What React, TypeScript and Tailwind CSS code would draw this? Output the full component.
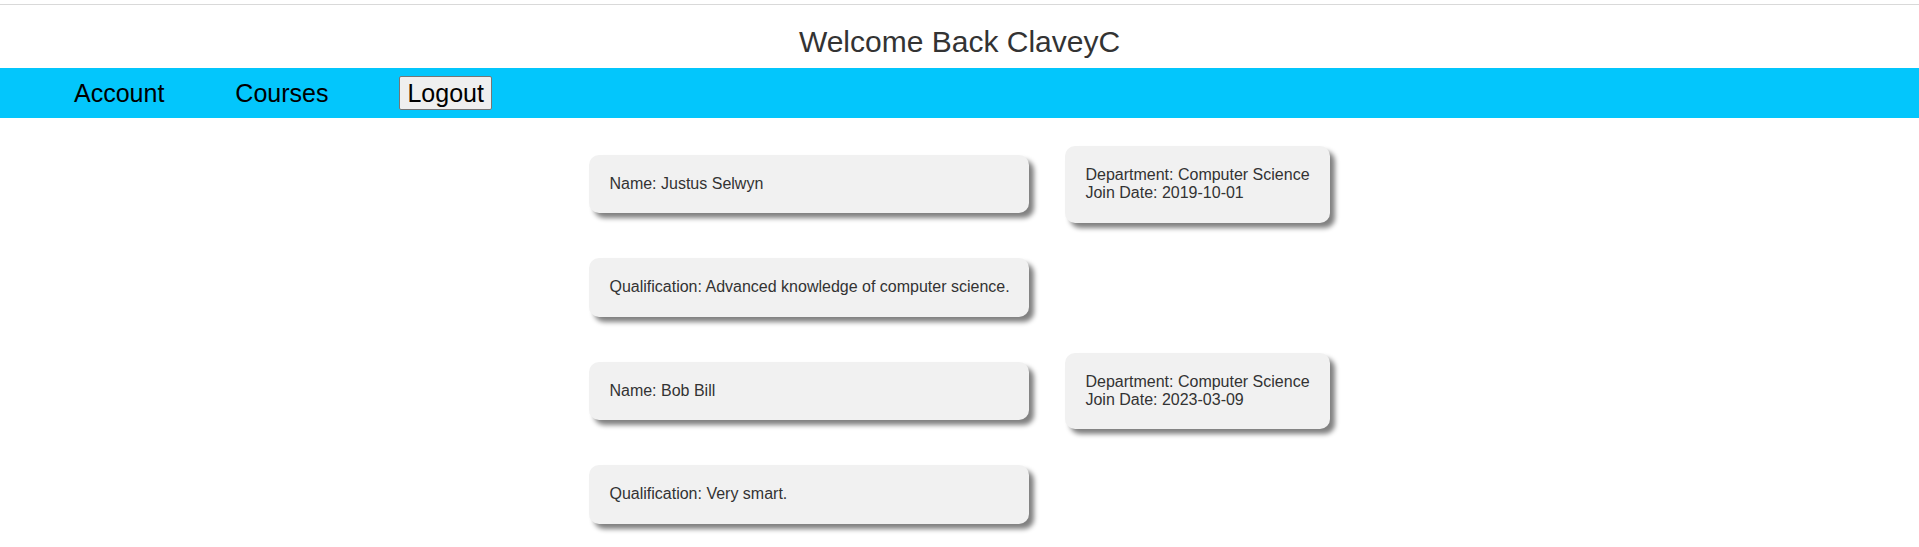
import React from "react";

type Teacher = {
  name: string;
  department: string;
  joinDate: string;
  qualification: string;
};

const teachers: Teacher[] = [
  {
    name: "Justus Selwyn",
    department: "Computer Science",
    joinDate: "2019-10-01",
    qualification: "Advanced knowledge of computer science.",
  },
  {
    name: "Bob Bill",
    department: "Computer Science",
    joinDate: "2023-03-09",
    qualification: "Very smart.",
  },
];

const card =
  "bg-[#f1f1f1] rounded-[10px] p-[20px] text-[16px] leading-[1.15] text-[#333] whitespace-nowrap shadow-[5px_5px_5px_gray]";

export default function App() {
  return (
    <div className="min-h-screen bg-white font-['Liberation_Sans',Arial,sans-serif]">
      <div className="pt-[4px]">
        <div className="border-t border-[#d9d9d9]" />
      </div>
      <h1 className="mt-[20px] text-center text-[30px] leading-[33.5px] font-normal text-[#333]">
        Welcome Back ClaveyC
      </h1>

      {/* Nav bar */}
      <nav className="mt-[9.5px] h-[49.5px] bg-[#03c6fc] flex items-center pl-[74px] gap-[71px] text-[25px] leading-[28px] text-black">
        <a className="cursor-pointer">Account</a>
        <a className="cursor-pointer">Courses</a>
        <button className="bg-[#efefef] border border-[#767676] rounded-[2px] px-[7px] py-[2px] text-[25px] leading-[28px] text-black">
          Logout
        </button>
      </nav>

      {/* Teacher list */}
      <div className="pt-[15px]">
        {teachers.map((t) => (
          <div
            key={t.name}
            className="grid grid-cols-[440px_auto] justify-center items-center gap-x-[36px]"
          >
            <div className={`${card} my-[22.5px]`}>Name: {t.name}</div>
            <div className={card}>
              Department: {t.department}
              <br />
              Join Date: {t.joinDate}
            </div>
            <div className={`${card} my-[22.5px]`}>Qualification: {t.qualification}</div>
            <div />
          </div>
        ))}
      </div>
    </div>
  );
}
